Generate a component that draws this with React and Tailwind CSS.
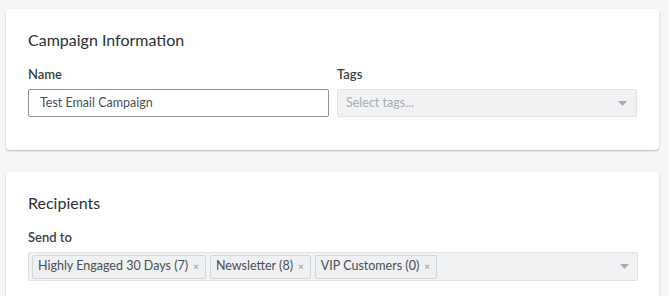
import React from "react";

const Caret = () => (
	<svg width="9" height="5" viewBox="0 0 9 5" className="fill-[#a9adb2]">
		<path d="M0 0h9L4.5 5z" />
	</svg>
);

const Chip = ({ label }) => (
	<div className="flex items-center h-[24px] pl-[5px] pr-[6px] gap-[5px] bg-[#eef0f2] border border-[#d3d6da] rounded-[2px] text-[12.5px] text-[#4a4f55]">
		<span>{label}</span>
		<span className="text-[10px] text-[#8e9399]">×</span>
	</div>
);

const App = () => {
	const recipients = ["Highly Engaged 30 Days (7)", "Newsletter (8)", "VIP Customers (0)"];

	return (
		<div className="w-[669px] h-[296px] overflow-hidden bg-[#f5f6f7] pt-[9px] pl-[6px] pr-[10px] font-['Lato',sans-serif]">
			<div className="bg-white rounded-[4px] shadow-[0_1px_2px_rgba(0,0,0,0.25)] h-[141px] px-[22px] pt-[21px]">
				<h2 className="text-[16px] text-[#2b3035] leading-[20px]">Campaign Information</h2>
				<div className="flex gap-[8px] mt-[16px]">
					<div className="w-[301px]">
						<div className="text-[13px] font-semibold text-[#3a3f44] leading-[16px]">Name</div>
						<div className="mt-[7px] h-[28px] border border-[#8e9297] rounded-[2px] px-[11px] flex items-center text-[12.5px] text-[#4a4f55]">
							Test Email Campaign
						</div>
					</div>
					<div className="w-[300px]">
						<div className="text-[13px] font-semibold text-[#3a3f44] leading-[16px]">Tags</div>
						<div className="mt-[7px] h-[28px] bg-[#f1f2f4] border border-[#e0e2e5] rounded-[2px] pl-[8px] pr-[9px] flex items-center justify-between text-[12.5px] text-[#a9adb2]">
							<span>Select tags...</span>
							<Caret />
						</div>
					</div>
				</div>
			</div>

			<div className="mt-[22px] bg-white rounded-[4px] shadow-[0_1px_2px_rgba(0,0,0,0.25)] h-[140px] px-[22px] pt-[21px]">
				<h2 className="text-[16px] text-[#2b3035] leading-[20px]">Recipients</h2>
				<div className="mt-[16px] text-[13px] font-semibold text-[#3a3f44] leading-[16px]">Send to</div>
				<div className="mt-[7px] w-[610px] h-[29px] bg-[#f1f2f4] border border-[#e0e2e5] rounded-[2px] pl-[3px] pr-[8px] flex items-center justify-between">
					<div className="flex gap-[4px]">
						{recipients.map((r) => (
							<Chip key={r} label={r} />
						))}
					</div>
					<Caret />
				</div>
			</div>
		</div>
	);
};

export default App;
